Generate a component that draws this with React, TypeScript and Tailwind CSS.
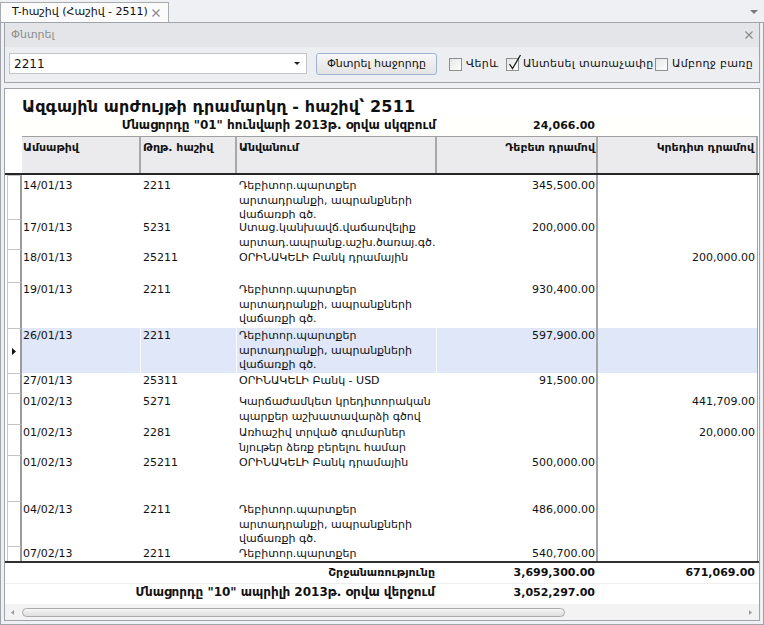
import React from "react";

type Row = {
  date: string;
  acc: string;
  name: string[];
  debit?: string;
  credit?: string;
  h: string;
  pt: string;
  selected?: boolean;
};

const DEBTOR = ["Դեբիտոր.պարտքեր", "արտադրանքի, ապրանքների", "վաճառքի գծ."];
const BANK = ["ՕՐԻՆԱԿԵԼԻ Բանկ դրամային"];

// last row is cut by the report's footer, only its first line shows
const ROWS: Row[] = [
  { date: "14/01/13", acc: "2211", name: DEBTOR, debit: "345,500.00", h: "h-[44px]", pt: "pt-[4px]" },
  {
    date: "17/01/13",
    acc: "5231",
    name: ["Ստաց.կանխավճ.վաճառվելիք", "արտադ.ապրանք.աշխ.ծառայ.գծ."],
    debit: "200,000.00",
    h: "h-[30px]",
    pt: "pt-[2px]",
  },
  { date: "18/01/13", acc: "25211", name: BANK, credit: "200,000.00", h: "h-[33px]", pt: "pt-[2px]" },
  { date: "19/01/13", acc: "2211", name: DEBTOR, debit: "930,400.00", h: "h-[46px]", pt: "pt-[1px]" },
  { date: "26/01/13", acc: "2211", name: DEBTOR, debit: "597,900.00", h: "h-[45px]", pt: "pt-[1px]", selected: true },
  { date: "27/01/13", acc: "25311", name: ["ՕՐԻՆԱԿԵԼԻ Բանկ - USD"], debit: "91,500.00", h: "h-[20px]", pt: "pt-[1px]" },
  {
    date: "01/02/13",
    acc: "5271",
    name: ["Կարճաժամկետ կրեդիտորական", "պարքեր աշխատավարձի գծով"],
    credit: "441,709.00",
    h: "h-[31px]",
    pt: "pt-[2px]",
  },
  {
    date: "01/02/13",
    acc: "2281",
    name: ["Առհաշիվ տրված գումարներ", "նյութեր ձեռք բերելու համար"],
    credit: "20,000.00",
    h: "h-[31px]",
    pt: "pt-[2px]",
  },
  { date: "01/02/13", acc: "25211", name: BANK, debit: "500,000.00", h: "h-[46px]", pt: "pt-[1px]" },
  { date: "04/02/13", acc: "2211", name: DEBTOR, debit: "486,000.00", h: "h-[45px]", pt: "pt-[2px]" },
  { date: "07/02/13", acc: "2211", name: ["Դեբիտոր.պարտքեր"], debit: "540,700.00", h: "h-[15px]", pt: "pt-[1px]" },
];

function CloseX({ className }: { className?: string }) {
  return (
    <svg width="8" height="8" viewBox="0 0 8 8" className={className}>
      <path d="M0.5 0.5 L7.5 7.5 M7.5 0.5 L0.5 7.5" stroke="#8a8a8a" strokeWidth="1.2" />
    </svg>
  );
}

function Checkbox({ checked, label, className }: { checked?: boolean; label: string; className?: string }) {
  return (
    <div className={"flex items-center h-[22px] " + (className ?? "")}>
      <div className="relative w-[13px] h-[13px] border border-[#8e8f8f] bg-gradient-to-br from-[#e6e6e6] to-white shrink-0">
        {checked && (
          <svg width="14" height="16" viewBox="0 0 14 16" className="absolute left-[1px] top-[-5px] overflow-visible">
            <path d="M1.5 10 L4.5 14.5 L12.5 1" stroke="#1a1a1a" strokeWidth="1.3" fill="none" />
          </svg>
        )}
      </div>
      <span className="ml-[4px] whitespace-nowrap tracking-[0.3px]">{label}</span>
    </div>
  );
}

function DataRow({ row }: { row: Row }) {
  const bg = row.selected ? "bg-[#dfe7f9]" : "bg-white";
  const cell = bg + " " + row.pt;
  return (
    <div className={"flex shrink-0 leading-[14.5px] " + row.h}>
      <div className="w-[17px] pl-[2px] shrink-0 bg-white">
        <div className="h-full border-l border-t border-[#c4c4c4] border-r-2 border-r-[#9a9a9a] bg-white flex items-center justify-center">
          {row.selected && (
            <svg width="4" height="7" viewBox="0 0 4 7" className="mr-[1px]">
              <path d="M0 0 L4 3.5 L0 7 Z" fill="#111" />
            </svg>
          )}
        </div>
      </div>
      <div className={"w-[119px] pl-[1px] border-r border-white " + cell}>{row.date}</div>
      <div className={"w-[96px] pl-[2px] border-r border-white " + cell}>{row.acc}</div>
      <div className={"w-[200px] pl-[2px] border-r border-white " + cell}>
        {row.name.map((l) => (
          <div key={l} className="whitespace-nowrap">
            {l}
          </div>
        ))}
      </div>
      <div className={"w-[161px] pr-[1px] text-right border-r-2 border-[#a3a3a3] " + cell}>{row.debit}</div>
      <div className={"w-[160px] pr-[2px] text-right border-r border-[#a3a3a3] " + cell}>{row.credit}</div>
    </div>
  );
}

export default function App() {
  return (
    <div className="w-[764px] h-[625px] bg-[#eef0f3] flex flex-col overflow-hidden font-['DejaVu_Sans',sans-serif] text-[11px] text-[#111]">
      {/* tab strip */}
      <div className="h-[22px] shrink-0 flex items-end justify-between">
        <div className="h-[20px] w-[169px] border border-b-0 border-[#a7abb0] bg-[#fbfbfc] flex items-center justify-between pl-[11px] pr-[8px]">
          <span className="whitespace-nowrap">T-հաշիվ (Հաշիվ - 2511)</span>
          <CloseX />
        </div>
        <svg width="8" height="4" viewBox="0 0 8 4" className="mr-[6px] mb-[8px]">
          <path d="M0 0 L8 0 L4 4 Z" fill="#7a7a7a" />
        </svg>
      </div>

      <div className="flex-1 border border-[#a0a4aa] px-[3px] pb-[3px] flex flex-col">
        {/* search panel */}
        <div className="h-[60px] shrink-0 border-x border-b border-[#a0a4aa] flex flex-col">
          <div className="h-[24px] bg-[#e3e5e8] flex items-center justify-between pl-[6px] pr-[6px]">
            <span className="text-[#8d8d8d]">Փնտրել</span>
            <CloseX />
          </div>
          <div className="flex-1 bg-[#eceef1] flex items-start pt-[6px] pl-[4px]">
            <div className="w-[298px] h-[21px] border border-[#c2c4c8] bg-white flex items-center justify-between pl-[4px] pr-[6px]">
              <span className="text-[12px]">2211</span>
              <svg width="6" height="3" viewBox="0 0 6 3">
                <path d="M0 0 L6 0 L3 3 Z" fill="#222" />
              </svg>
            </div>
            <button className="ml-[9px] w-[121px] h-[22px] rounded-[3px] border border-[#9fb2cf] bg-gradient-to-b from-[#f7f7f7] to-[#e3e3e3] flex items-center justify-center">
              Փնտրել հաջորդը
            </button>
            <Checkbox label="Վերև" className="ml-[12px] w-[57px]" />
            <Checkbox label="Անտեսել տառաչափը" checked className="w-[149px]" />
            <Checkbox label="Ամբողջ բառը" />
          </div>
        </div>

        {/* report */}
        <div className="mt-[5px] flex-1 border border-[#a0a4aa] bg-white flex flex-col overflow-hidden">
          <div className="h-[28px] shrink-0 pl-[17px] pt-[8px] leading-[20px] text-[16px] font-bold tracking-[0.15px] whitespace-nowrap">
            Ազգային արժույթի դրամարկղ - հաշիվ՝ 2511
          </div>
          <div className="h-[19px] shrink-0 flex items-baseline bg-[#fffffb] font-bold leading-[16px]">
            <div className="w-[432px] pr-[1px] text-right whitespace-nowrap text-[12px]">
              Մնացորդը "01" հունվարի 2013թ. օրվա սկզբում
            </div>
            <div className="w-[161px] pr-[3px] text-right">24,066.00</div>
          </div>

          {/* column headers */}
          <div className="h-[39px] shrink-0 flex flex-col">
            <div className="flex h-[37px] font-bold leading-[15px]">
              <div className="w-[17px] bg-white" />
              <div className="w-[119px] pl-[1px] pt-[3px] border-t border-[#a0a0a0] border-r-2 border-r-[#a8a8a8] bg-[#ebebee]">
                Ամսաթիվ
              </div>
              <div className="w-[96px] pl-[2px] pt-[3px] border-t border-[#a0a0a0] border-r-2 border-r-[#a8a8a8] bg-[#ebebee]">
                Թղթ. հաշիվ
              </div>
              <div className="w-[200px] pl-[2px] pt-[3px] border-t border-[#a0a0a0] border-r-2 border-r-[#a8a8a8] bg-[#ebebee]">
                Անվանում
              </div>
              <div className="w-[161px] pr-[1px] pt-[3px] text-right border-t border-[#a0a0a0] border-r-2 border-r-[#a8a8a8] bg-[#ebebee]">
                Դեբետ դրամով
              </div>
              <div className="w-[160px] pr-[2px] pt-[3px] text-right border-t border-[#a0a0a0] border-r-2 border-r-[#a8a8a8] bg-[#ebebee]">
                Կրեդիտ դրամով
              </div>
            </div>
            <div className="h-[2px] bg-[#262626]" />
          </div>

          {/* rows */}
          <div className="h-[386px] shrink-0 overflow-hidden flex flex-col">
            {ROWS.map((r, i) => (
              <DataRow key={i} row={r} />
            ))}
          </div>
          <div className="h-[2px] shrink-0 bg-[#303030]" />

          {/* totals */}
          <div className="h-[20px] shrink-0 flex items-baseline font-bold leading-[16px] pt-[2px]">
            <div className="w-[432px] pr-[2px] text-right">Շրջանառությունը</div>
            <div className="w-[161px] pr-[3px] text-right">3,699,300.00</div>
            <div className="w-[160px] pr-[3px] text-right">671,069.00</div>
          </div>
          <div className="h-[1px] shrink-0 bg-[#eeeeee]" />
          <div className="h-[17px] shrink-0 flex items-baseline font-bold leading-[16px]">
            <div className="w-[432px] pr-[2px] text-right whitespace-nowrap text-[12px]">
              Մնացորդը "10" ապրիլի 2013թ. օրվա վերջում
            </div>
            <div className="w-[161px] pr-[3px] text-right">3,052,297.00</div>
          </div>
          <div className="flex-1" />

          {/* horizontal scrollbar */}
          <div className="h-[16px] shrink-0 bg-[#f3f3f3] flex items-center pl-[6px] pr-[7px]">
            <svg width="3" height="5" viewBox="0 0 3 5">
              <path d="M3 0 L0 2.5 L3 5 Z" fill="#9a9a9a" />
            </svg>
            <div className="ml-[8px] w-[543px] h-[9px] rounded-full border border-[#a9a9a9] bg-gradient-to-b from-[#f6f6f6] to-[#dedede]" />
            <div className="flex-1" />
            <svg width="3" height="5" viewBox="0 0 3 5">
              <path d="M0 0 L3 2.5 L0 5 Z" fill="#9a9a9a" />
            </svg>
          </div>
        </div>
      </div>
    </div>
  );
}
